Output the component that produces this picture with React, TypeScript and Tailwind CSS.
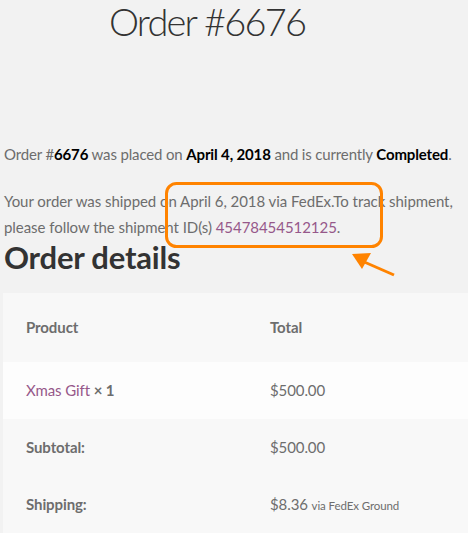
export default function App() {
  const font = { fontFamily: '"Source Sans Pro", Lato, "Noto Sans", sans-serif' };
  return (
    <div className="relative w-[468px] h-[533px] overflow-hidden bg-[#f2f2f2] text-[#6d6d6d]" style={font}>
      {/* Page title */}
      <div className="h-[141px] pl-[109px] pt-[1px]">
        <h1 className="text-[38px] leading-[40px] font-light tracking-[-1.8px] text-[#333]">Order #6676</h1>
      </div>

      {/* Order summary */}
      <p className="px-1 text-[15px] leading-[26px] tracking-[-0.15px]">
        Order #<mark className="bg-transparent font-bold text-black">6676</mark> was placed on{' '}
        <mark className="bg-transparent font-bold text-black">April 4, 2018</mark> and is currently{' '}
        <mark className="bg-transparent font-bold text-black">Completed</mark>.
      </p>
      <p className="mt-[21px] px-1 text-[15px] leading-[26px] tracking-[-0.05px]">
        Your order was shipped on April 6, 2018 via FedEx.To track shipment, please follow the shipment ID(s){' '}
        <a className="text-[#96588a]">45478454512125</a>.
      </p>

      <h2 className="px-1 text-[31px] leading-[34px] font-bold tracking-[-0.2px] text-[#333]">Order details</h2>

      {/* Order table */}
      <div className="mt-[19px] ml-[3px] text-[15px] tracking-[-0.1px]">
        <div className="grid grid-cols-[244px_1fr] h-[69px] items-center bg-[#f8f8f8] pl-[23px] font-bold">
          <span>Product</span>
          <span>Total</span>
        </div>
        <div className="grid grid-cols-[244px_1fr] h-[57px] items-center bg-[#fdfdfd] pl-[23px]">
          <span>
            <a className="text-[#96588a]">Xmas Gift</a> <strong className="font-bold">× 1</strong>
          </span>
          <span>$500.00</span>
        </div>
        <div className="grid grid-cols-[244px_1fr] h-[57px] items-center bg-[#f8f8f8] pl-[23px]">
          <span className="font-bold">Subtotal:</span>
          <span>$500.00</span>
        </div>
        <div className="grid grid-cols-[244px_1fr] h-[57px] items-center bg-[#f8f8f8] pl-[23px]">
          <span className="font-bold">Shipping:</span>
          <span>
            $8.36 <small className="text-[11.5px]">via FedEx Ground</small>
          </span>
        </div>
      </div>

      {/* Annotation overlay */}
      <svg className="absolute left-0 top-0 pointer-events-none" width="468" height="533">
        <rect x="166.5" y="183.5" width="215" height="63" rx="10" fill="none" stroke="#ff8300" strokeWidth="3" />
        <line x1="394" y1="275" x2="362" y2="261" stroke="#ff8300" strokeWidth="3" />
        <polygon points="352,254 371,253 362,269" fill="#ff8300" />
      </svg>
    </div>
  );
}
